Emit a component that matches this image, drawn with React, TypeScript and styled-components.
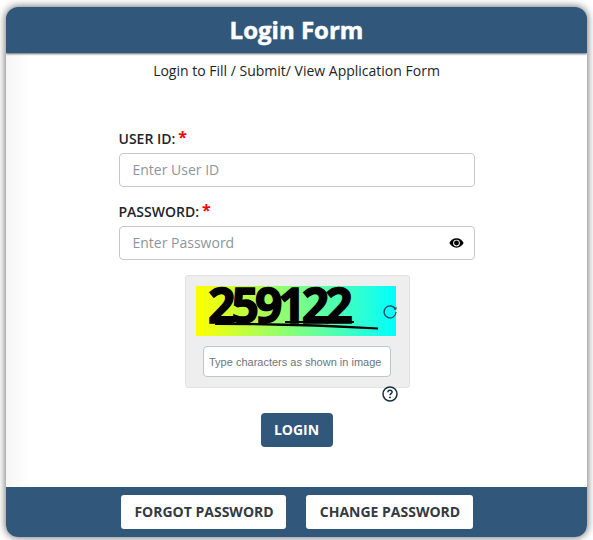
import React from "react"
import styled, { createGlobalStyle } from "styled-components"

const GlobalStyle = createGlobalStyle`
  html, body {
    margin: 0;
    padding: 0;
    background: #fff;
  }
  body {
    font-family: "Open Sans", "Liberation Sans", sans-serif;
    color: #212529;
  }
  * {
    box-sizing: border-box;
  }
`

const Page = styled.div`
  width: 593px;
  height: 540px;
  padding: 7px 6px 3px;
`

const Card = styled.div`
  width: 581px;
  height: 530px;
  display: flex;
  flex-direction: column;
  background: #fff;
  border-radius: 12px;
  overflow: hidden;
  box-shadow: 0 0 8px rgba(0, 0, 0, 0.65);
`

const Header = styled.div`
  height: 46px;
  flex: none;
  background: #31577b;
  color: #fff;
  font-size: 24px;
  font-weight: 700;
  line-height: 46px;
  text-align: center;
  -webkit-text-stroke: 0.5px #fff;
  box-shadow: 0 1px 2px rgba(0, 0, 0, 0.6);
  position: relative;
`

const Body = styled.div`
  flex: 1;
  display: flex;
  flex-direction: column;
  align-items: center;
  background: linear-gradient(to right, #f6f6f6, #fff 24px);
`

const Subtitle = styled.p`
  margin: 8px 0 0;
  font-size: 14px;
  line-height: 20px;
  color: #212529;
`

const Form = styled.form`
  width: 356px;
  margin-top: 48px;
  display: flex;
  flex-direction: column;
  gap: 15px;
`

const Field = styled.div`
  display: flex;
  flex-direction: column;
`

const Label = styled.label`
  font-size: 14px;
  font-weight: 600;
  line-height: 20px;
  height: 24px;
  color: #212529;
`

const Star = styled.span`
  color: #f00;
  font-size: 16px;
  font-weight: 700;
  line-height: 14px;
  margin-left: 3px;
  position: relative;
  top: -1px;
`

const InputWrap = styled.div`
  position: relative;
  height: 34px;
`

const Input = styled.input`
  width: 100%;
  height: 34px;
  padding: 0 13px 2px;
  border: 1px solid #c6c8ca;
  border-radius: 4px;
  background: #fff;
  font-family: inherit;
  font-size: 14px;
  outline: none;

  &::placeholder {
    color: #8f959b;
    opacity: 1;
  }
`

const EyeButton = styled.span`
  position: absolute;
  right: 11px;
  top: 10px;
  width: 15px;
  height: 14px;
  display: flex;
`

const CaptchaBox = styled.div`
  position: relative;
  width: 225px;
  height: 113px;
  margin: 15px 0 0 2px;
  padding: 10px 0 0 10px;
  background: #eeeeee;
  border: 1px solid #e2e2e2;
  border-radius: 3px;
`

const CaptchaImage = styled.div`
  position: relative;
  width: 200px;
  height: 50px;
  background: linear-gradient(to right, #ffff00, #00ffff);
`

const CaptchaText = styled.span`
  position: absolute;
  left: 12px;
  top: 0;
  font-size: 48px;
  font-weight: 700;
  line-height: 38px;
  letter-spacing: -4px;
  color: #000;
  -webkit-text-stroke: 1.4px #000;
`

const CaptchaStroke = styled.svg`
  position: absolute;
  left: 0;
  top: 0;
`

const Refresh = styled.svg`
  position: absolute;
  left: 196px;
  top: 28px;
`

const CaptchaInput = styled.input`
  display: block;
  width: 188px;
  height: 31px;
  margin: 10px 0 0 7px;
  padding: 0 5px;
  border: 1px solid #bfc5ca;
  border-radius: 4px;
  background: #fff;
  font-family: "Liberation Sans", Arial, sans-serif;
  font-size: 11px;
  outline: none;

  &::placeholder {
    color: #6c757d;
    opacity: 1;
  }
`

const Help = styled.svg`
  position: absolute;
  left: 196px;
  top: 110px;
`

const LoginButton = styled.button`
  width: 72px;
  height: 34px;
  margin-top: 25px;
  padding: 0 0 2px;
  border: none;
  border-radius: 4px;
  background: #31577b;
  color: #fff;
  font-family: inherit;
  font-size: 14px;
  font-weight: 700;
`

const Footer = styled.div`
  height: 50px;
  flex: none;
  display: flex;
  justify-content: center;
  gap: 20px;
  padding-top: 8px;
  background: #31577b;
`

const FooterButton = styled.button<{ $width: number }>`
  width: ${(p) => p.$width}px;
  height: 34px;
  padding: 0 0 2px 2px;
  border: none;
  border-radius: 3px;
  background: #fff;
  color: #343a40;
  font-family: inherit;
  font-size: 14px;
  font-weight: 700;
`

const App = () => (
  <Page>
    <GlobalStyle />
    <Card>
      <Header>Login Form</Header>
      <Body>
        <Subtitle>Login to Fill / Submit/ View Application Form</Subtitle>
        <Form>
          <Field>
            <Label>
              USER ID:<Star>*</Star>
            </Label>
            <InputWrap>
              <Input placeholder="Enter User ID" />
            </InputWrap>
          </Field>
          <Field>
            <Label>
              PASSWORD:<Star>*</Star>
            </Label>
            <InputWrap>
              <Input placeholder="Enter Password" />
              <EyeButton>
                <svg width="15" height="14" viewBox="0 0 16 14">
                  <path
                    d="M8 2C4.600 2 1.800 4.200.4 7c1.400 2.800 4.200 5 7.600 5s6.200-2.200 7.600-5C14.200 4.200 11.400 2 8 2zm0 8.600A3.600 3.600 0 1 1 8 3.400a3.600 3.600 0 0 1 0 7.200z"
                    fill="#000"
                  />
                  <circle cx="8" cy="7" r="2.600" fill="#000" />
                </svg>
              </EyeButton>
            </InputWrap>
          </Field>
        </Form>
        <CaptchaBox>
          <CaptchaImage>
            <CaptchaText>259122</CaptchaText>
            <CaptchaStroke width="200" height="50">
              <rect x="89" y="35" width="69" height="2" fill="#000" />
              <path d="M19 37 L19 39 Q100 39 182 43.500 L182 41.500 Q100 36 19 37 Z" fill="#000" />
            </CaptchaStroke>
          </CaptchaImage>
          <Refresh width="16" height="16" viewBox="0 0 16 16">
            <path
              d="M13.500 5.500A6 6 0 1 0 14 8"
              stroke="#1f4a5c"
              strokeWidth="1.300"
              fill="none"
            />
            <path d="M11.500 5.500h3v-3z" fill="#1f4a5c" />
          </Refresh>
          <CaptchaInput placeholder="Type characters as shown in image" />
          <Help width="16" height="16" viewBox="0 0 16 16">
            <circle cx="8" cy="8" r="7" stroke="#12303f" strokeWidth="1.500" fill="#fff" />
            <path
              d="M5.900 6.200C6 5 6.900 4.300 8 4.300c1.200 0 2.100.8 2.100 1.800 0 1.500-2.100 1.600-2.100 3.200"
              stroke="#12303f"
              strokeWidth="1.500"
              fill="none"
            />
            <circle cx="8" cy="11.400" r="0.950" fill="#12303f" />
          </Help>
        </CaptchaBox>
        <LoginButton type="button">LOGIN</LoginButton>
      </Body>
      <Footer>
        <FooterButton type="button" $width={165}>FORGOT PASSWORD</FooterButton>
        <FooterButton type="button" $width={167}>CHANGE PASSWORD</FooterButton>
      </Footer>
    </Card>
  </Page>
)

export default App
